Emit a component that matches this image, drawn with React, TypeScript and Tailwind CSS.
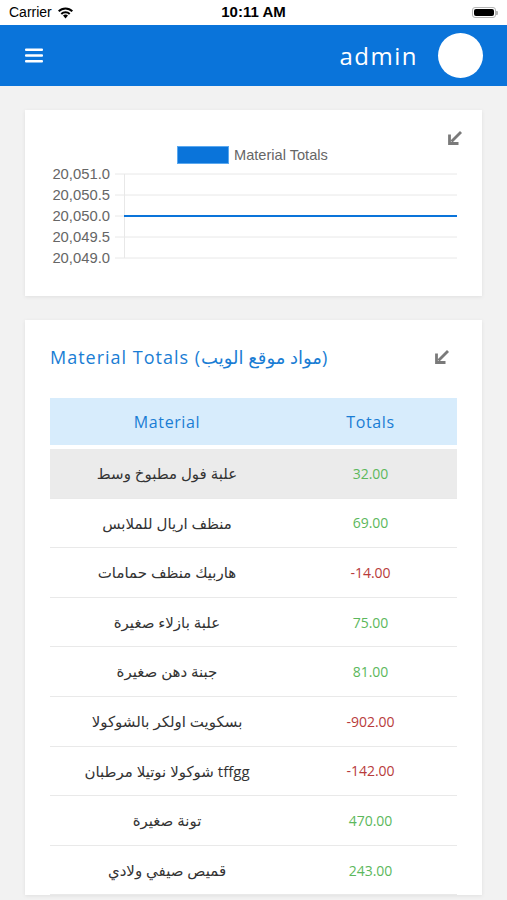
import React from "react";

const rows = [
  { name: "علبة فول مطبوخ وسط", total: "32.00", neg: false },
  { name: "منظف اريال للملابس", total: "69.00", neg: false },
  { name: "هاربيك منظف حمامات", total: "-14.00", neg: true },
  { name: "علبة بازلاء صغيرة", total: "75.00", neg: false },
  { name: "جبنة دهن صغيرة", total: "81.00", neg: false },
  { name: "بسكويت اولكر بالشوكولا", total: "-902.00", neg: true },
  { name: "tffgg شوكولا نوتيلا مرطبان", total: "-142.00", neg: true },
  { name: "تونة صغيرة", total: "470.00", neg: false },
  { name: "قميص صيفي ولادي", total: "243.00", neg: false },
];

const yLabels = ["20,051.0", "20,050.5", "20,050.0", "20,049.5", "20,049.0"];

const ShrinkIcon = () => (
  <svg width="16" height="16" viewBox="0 0 16 16" fill="none">
    <path d="M14 2 L4.5 11.5" stroke="#7a7a7a" strokeWidth="2.8" />
    <path d="M2.5 4.5 V13.5 H11.5" stroke="#7a7a7a" strokeWidth="2.8" />
  </svg>
);

const StatusBar = () => (
  <div className="h-[25px] bg-white flex items-center justify-between px-[9px] relative font-['Liberation_Sans',sans-serif] text-[14px] text-black">
    <div className="flex items-center gap-[5px]">
      <span>Carrier</span>
      <svg width="17" height="12" viewBox="0 0 17 12">
        <path d="M8.5 11.5 L6 8.6 A3.6 3.6 0 0 1 11 8.6 Z" fill="#000" />
        <path d="M3.6 6.2 A7 7 0 0 1 13.4 6.2 L12 7.7 A5 5 0 0 0 5 7.7 Z" fill="#000" />
        <path d="M1 3.6 A10.6 10.6 0 0 1 16 3.6 L14.6 5.1 A8.6 8.6 0 0 0 2.4 5.1 Z" fill="#000" />
      </svg>
    </div>
    <span className="absolute left-1/2 -translate-x-1/2 font-bold text-[15px]">10:11 AM</span>
    <div className="flex items-center">
      <div className="w-[24px] h-[11px] rounded-[3px] border border-[#b5b5b5] p-[1px]">
        <div className="w-full h-full bg-black rounded-[2px]" />
      </div>
      <div className="w-[2px] h-[4px] bg-[#b5b5b5] rounded-r-[1px]" />
    </div>
  </div>
);

const Header = () => (
  <div className="h-[61px] bg-[#0a74da] flex items-center justify-between pl-[25px] pr-[24px]">
    <svg width="18" height="15" viewBox="0 0 18 15">
      <rect x="0" y="0.5" width="18" height="2.4" rx="1" fill="#fff" />
      <rect x="0" y="6.3" width="18" height="2.4" rx="1" fill="#fff" />
      <rect x="0" y="12.1" width="18" height="2.4" rx="1" fill="#fff" />
    </svg>
    <div className="flex items-center gap-[20px]">
      <span className="text-white text-[24px] tracking-[1.5px] font-['Open_Sans',sans-serif]">admin</span>
      <div className="w-[45px] h-[45px] rounded-full bg-white" />
    </div>
  </div>
);

const ChartCard = () => (
  <div className="relative h-[186px] bg-white shadow-[0_1px_4px_rgba(0,0,0,0.08)]">
    <div className="absolute right-[19px] top-[20px]">
      <ShrinkIcon />
    </div>
    <svg width="458" height="186" viewBox="0 0 458 186" className="block font-['Liberation_Sans',sans-serif]">
      <rect x="152.5" y="36.5" width="51" height="17" fill="#0a74da" stroke="#5aa8ef" strokeWidth="1" />
      <text x="209" y="50" fontSize="14.6" fill="#666">Material Totals</text>
      {yLabels.map((l, i) => (
        <g key={l}>
          <line x1="90" x2="432" y1={64 + i * 21} y2={64 + i * 21} stroke="#e8e8e8" strokeWidth="1" />
          <text x="85" y={69 + i * 21} fontSize="14.8" fill="#666" textAnchor="end">
            {l}
          </text>
        </g>
      ))}
      <line x1="99.5" x2="99.5" y1="64" y2="148" stroke="#e8e8e8" strokeWidth="1" />
      <line x1="99" x2="432" y1="106" y2="106" stroke="#0a74da" strokeWidth="2" />
    </svg>
  </div>
);

const TableCard = () => (
  <div className="bg-white shadow-[0_1px_4px_rgba(0,0,0,0.08)] px-[25px] pt-[26px] font-['Open_Sans','DejaVu_Sans',sans-serif]">
    <div className="flex items-center justify-between pr-[7px] h-[22px]">
      <h2 className="text-[18px] text-[#1a7dd4] tracking-[1px]">Material Totals (مواد موقع الويب)</h2>
      <ShrinkIcon />
    </div>
    <div className="mt-[30px]">
      <div className="flex h-[47px] bg-[#d7ecfc] items-center text-[16px] text-[#1a7dd4] tracking-[0.6px] mb-[4px]">
        <div className="w-[234px] text-center">Material</div>
        <div className="flex-1 text-center">Totals</div>
      </div>
      {rows.map((r, i) => (
        <div
          key={i}
          className={`flex h-[49.6px] items-center border-b border-[#e9e9e9] ${i === 0 ? "bg-[#ebebeb]" : ""}`}
        >
          <div className="w-[234px] text-center text-[15px] text-[#333]" dir="rtl">
            {r.name}
          </div>
          <div className={`flex-1 text-center text-[14px] ${r.neg ? "text-[#b83b3b]" : "text-[#5cb85c]"}`}>
            {r.total}
          </div>
        </div>
      ))}
    </div>
  </div>
);

export default function App() {
  return (
    <div className="min-h-screen bg-[#f2f2f2]">
      <StatusBar />
      <Header />
      <div className="px-[25px] pt-[24px] flex flex-col gap-[24px]">
        <ChartCard />
        <TableCard />
      </div>
    </div>
  );
}
